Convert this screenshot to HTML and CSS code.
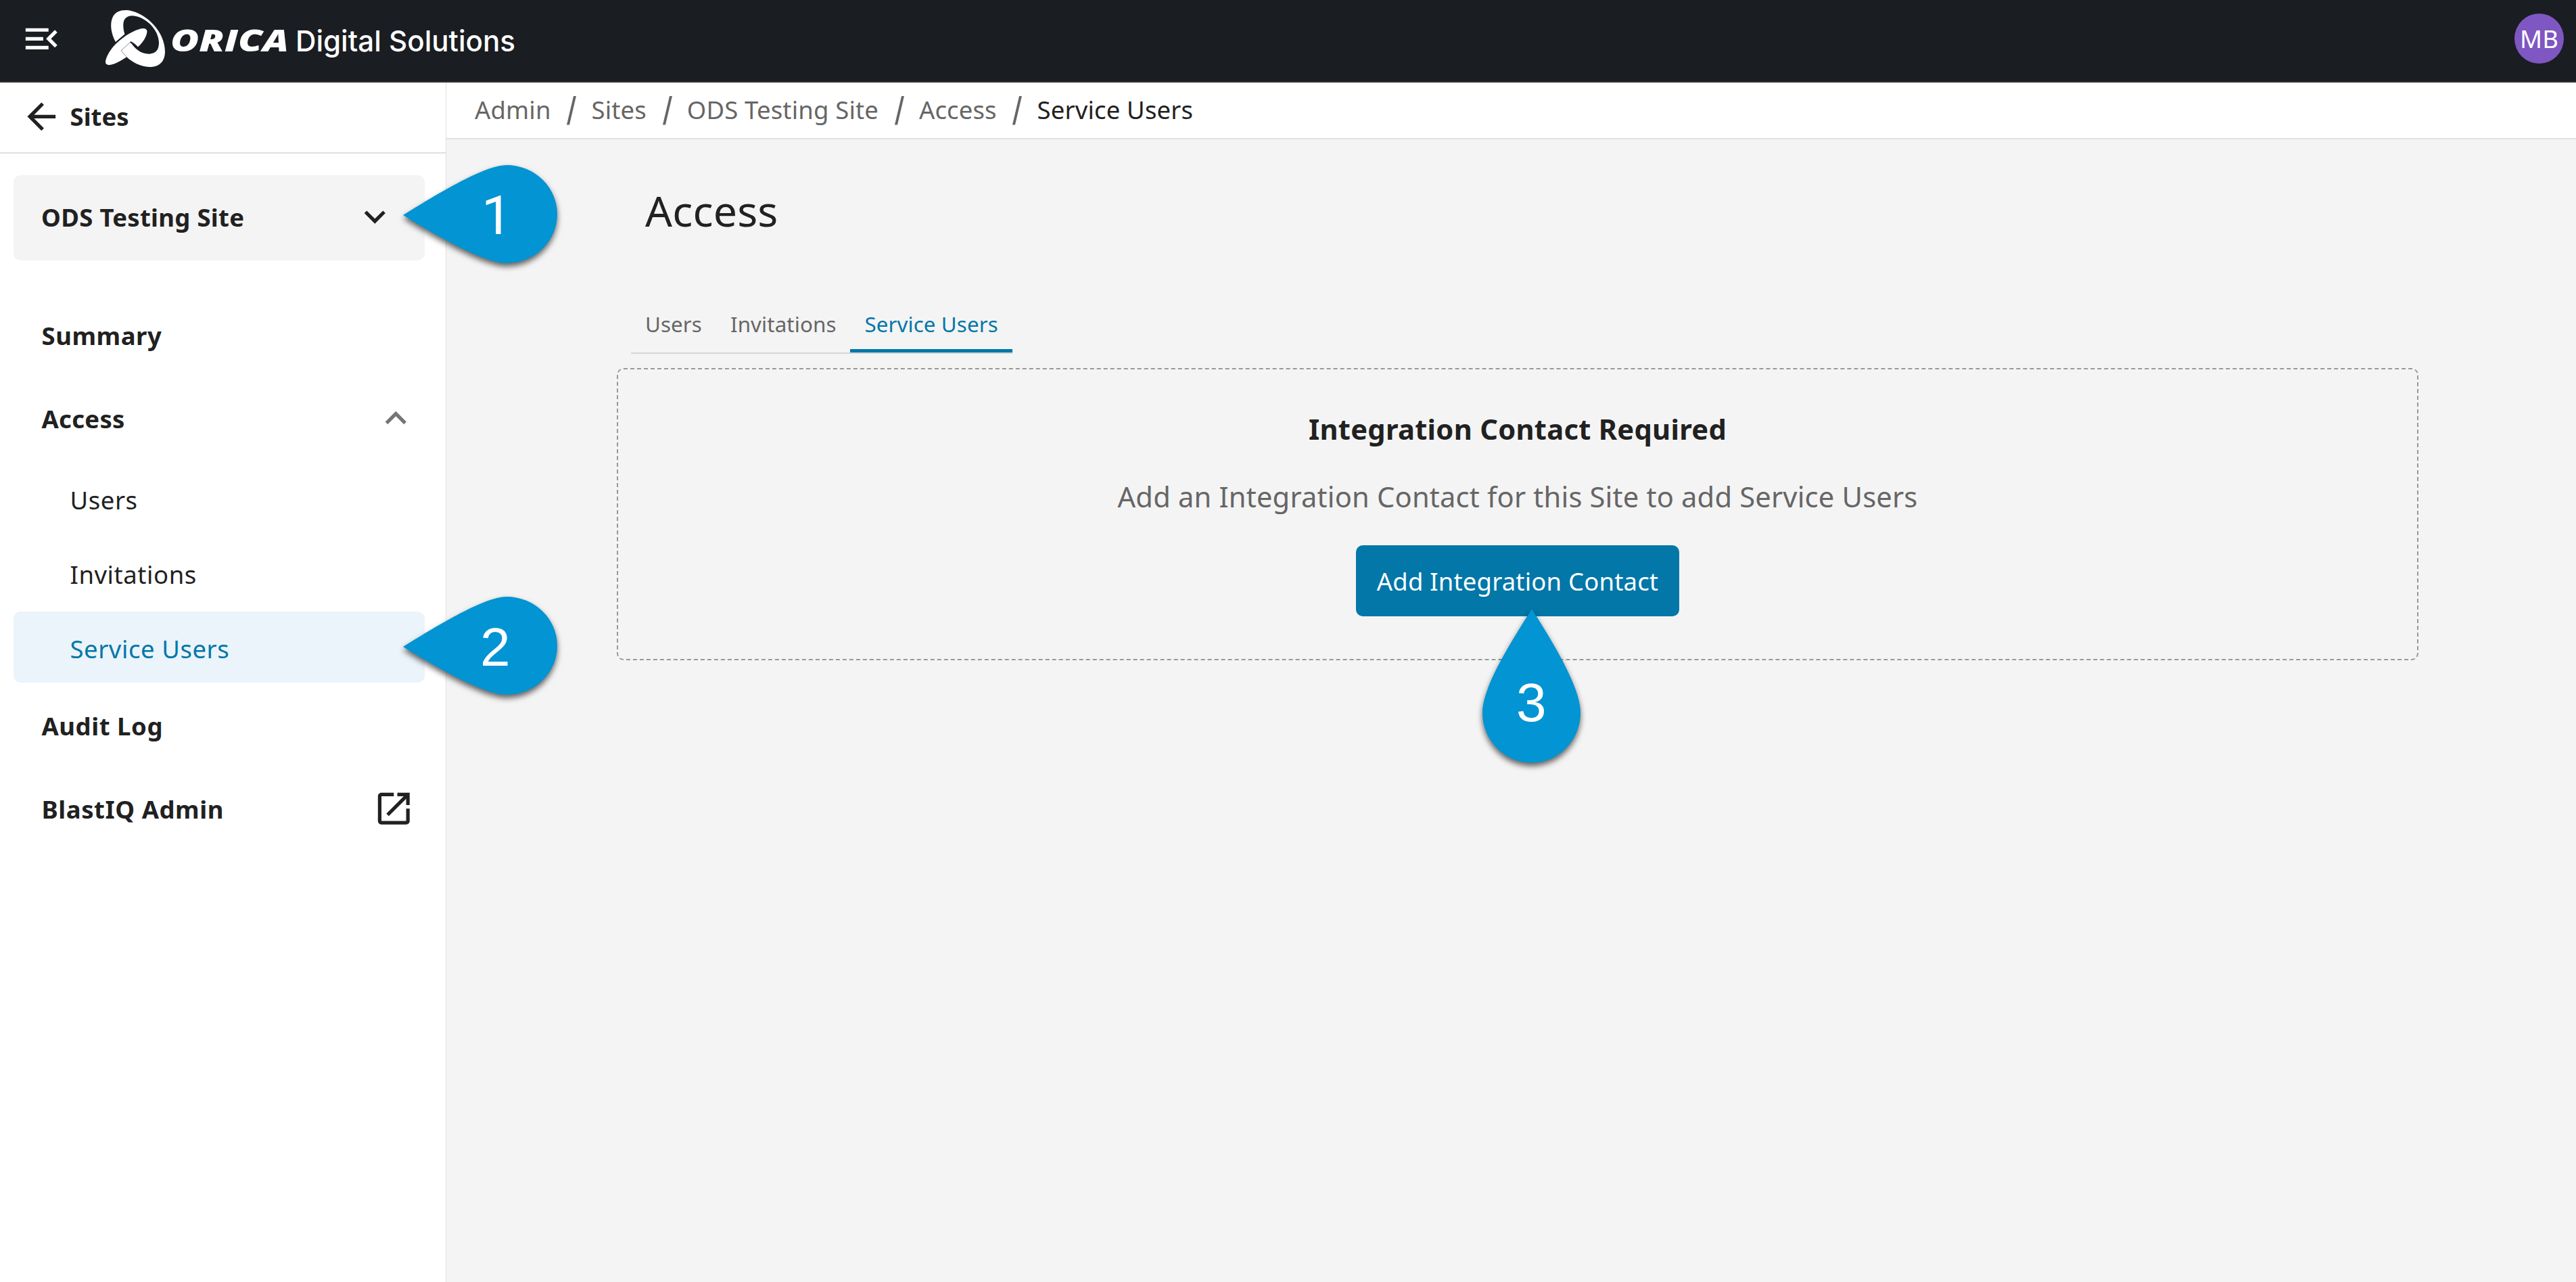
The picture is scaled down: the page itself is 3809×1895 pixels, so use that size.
FILE: index.html
```html
<!DOCTYPE html>
<html lang="en">
<head>
<meta charset="utf-8">
<title>Access - Service Users</title>
<link rel="stylesheet" href="styles.css">
</head>
<body>
<header class="topbar">
  <svg class="icon" viewBox="0 0 24 24"><path d="M3 18h13v-2H3v2zM3 6v2h13V6H3zm0 7h10v-2H3v2zm18 2.59L17.42 12 21 8.41 19.59 7l-5 5 5 5L21 15.59z"/></svg>
  <svg class="brand" viewBox="0 0 620 120">
    <g transform="scale(.33333)">
      <path d="M94 188C72 150 67 105 79 78C91 50 120 42 152 46C232 60 312 142 312 230C311 275 285 297 243 297C202 296 165 275 142 253C112 273 82 289 62 288C50 287 46 279 49 267C57 236 82 203 110 180C150 147 200 122 222 127C236 131 234 145 227 161C219 179 207 195 190 210L159 187C178 217 205 240 243 239C272 237 285 220 285 190C285 130 222 71 165 70C130 71 118 99 134 154Z"/>
      <path class="brand-gap" d="M94 188L136 153" stroke-width="5"/>
      <path class="brand-gap" d="M158 186C168 190 180 200 191 211" stroke-width="6"/>
      <path class="brand-gap" d="M159 187L117 224L142 253" stroke-width="1.5"/>
    </g>
    <text class="brand-name" x="112" y="76" textLength="175" lengthAdjust="spacingAndGlyphs">ORICA</text>
    <text class="brand-unit" x="297" y="76" textLength="325" lengthAdjust="spacingAndGlyphs">Digital Solutions</text>
  </svg>
  <div class="avatar">MB</div>
</header>
<div class="layout">
  <aside class="sidebar">
    <a class="back"><svg class="icon" viewBox="0 0 24 24"><path d="M20 11H7.83l5.59-5.59L12 4l-8 8 8 8 1.41-1.41L7.83 13H20v-2z"/></svg><span>Sites</span></a>
    <div class="site-select"><span>ODS Testing Site</span><svg class="icon" viewBox="0 0 24 24"><path d="M7.41 8.59 12 13.17l4.59-4.58L18 10l-6 6-6-6 1.41-1.41z"/></svg></div>
    <nav class="nav">
      <a class="nav-item"><span>Summary</span></a>
      <a class="nav-item nav-group"><span>Access</span><svg class="icon icon-muted" viewBox="0 0 24 24"><path d="m12 8-6 6 1.41 1.41L12 10.83l4.59 4.58L18 14z"/></svg></a>
      <div class="subnav">
        <a class="sub-item">Users</a>
        <a class="sub-item">Invitations</a>
        <a class="sub-item active">Service Users</a>
      </div>
      <a class="nav-item"><span>Audit Log</span></a>
      <a class="nav-item"><span>BlastIQ Admin</span><svg class="icon" viewBox="0 0 24 24"><path d="M19 19H5V5h7V3H5c-1.11 0-2 .9-2 2v14c0 1.1.89 2 2 2h14c1.1 0 2-.9 2-2v-7h-2v7zM14 3v2h3.59l-9.83 9.83 1.41 1.41L19 6.41V10h2V3h-7z"/></svg></a>
    </nav>
  </aside>
  <main class="main">
    <div class="breadcrumbs"><span>Admin</span><i class="slash">/</i><span>Sites</span><i class="slash">/</i><span>ODS Testing Site</span><i class="slash">/</i><span>Access</span><i class="slash">/</i><span class="current">Service Users</span></div>
    <h1 class="title">Access</h1>
    <div class="tabs"><a class="tab">Users</a><a class="tab">Invitations</a><a class="tab selected">Service Users</a></div>
    <section class="notice">
      <h2 class="notice-title">Integration Contact Required</h2>
      <p class="notice-text">Add an Integration Contact for this Site to add Service Users</p>
      <button class="button">Add Integration Contact</button>
    </section>
  </main>
</div>
<svg class="marker marker-left marker-1" viewBox="0 0 236 160"><path d="M1 75C45 48 120 1 154 1A75 72.500 0 0 1 154 146C120 146 45 102 1 75Z"/><text class="digit-one" x="117" y="103">1</text></svg>
<svg class="marker marker-left marker-2" viewBox="0 0 236 160"><path d="M1 75C45 48 120 1 154 1A75 72.500 0 0 1 154 146C120 146 45 102 1 75Z"/><text x="115" y="103">2</text></svg>
<svg class="marker marker-down" viewBox="0 0 148 236"><path d="M74 1C102 46 146 115 146 154.500A72.500 74 0 0 1 1 154.500C1 115 46 46 74 1Z"/><text x="51" y="167">3</text></svg>
</body>
</html>
```
FILE: styles.css
```css
* { box-sizing: border-box; }
body {
  margin: 0;
  height: 1895px;
  display: flex;
  flex-direction: column;
  overflow: hidden;
  background: #f4f4f4;
  color: #212121;
  font-family: "Noto Sans", sans-serif;
  font-size: 36.5px;
  line-height: 50px;
}
.icon { width: 62.6px; height: 62.6px; fill: #212121; flex: none; display: block; }
.icon-muted { fill: #757575; }

.topbar {
  display: flex;
  align-items: center;
  height: 122px;
  padding: 0 18px 6px 30px;
  background: #1a1d21;
  border-bottom: 2px solid #2f3235;
}
.topbar .icon { fill: #fff; }
.brand { width: 620px; height: 120px; margin: 6px 0 0 47px; fill: #fff; overflow: visible; }
.brand-gap { fill: none; stroke: #1a1d21; }
.brand-name { font: italic 800 45px "Open Sans", sans-serif; }
.brand-unit { font: 500 43px Inter, sans-serif; }
.avatar {
  width: 73px;
  height: 74px;
  margin-left: auto;
  border-radius: 50%;
  background: #7e57c2;
  color: #fff;
  text-align: center;
  line-height: 74px;
}

.layout { display: flex; flex: 1; }
.sidebar {
  width: 660px;
  background: #fff;
  border-right: 1px solid #e0e0e0;
  font-weight: 700;
  letter-spacing: .55px;
}
.back {
  display: flex;
  align-items: center;
  gap: 11px;
  height: 105px;
  padding: 0 0 2px 30px;
  border-bottom: 2px solid #e0e0e0;
  letter-spacing: 0;
}
.back span { margin-bottom: 2px; }
.site-select {
  display: flex;
  justify-content: space-between;
  align-items: center;
  height: 126px;
  margin: 32px 31px 50px 20px;
  padding: 0 42px 3px 41px;
  border-radius: 10px;
  background: #f4f4f4;
  letter-spacing: .3px;
}
.nav-item {
  display: flex;
  justify-content: space-between;
  align-items: center;
  height: 122.500px;
  padding: 0 45px 0 61.500px;
}
.nav-group { padding-right: 42px; letter-spacing: .3px; }
.subnav {
  display: flex;
  flex-direction: column;
  gap: 5px;
  padding: 4px 31px 3px 20px;
  font-weight: 400;
}
.sub-item { height: 105px; padding: 5px 0 0 83.500px; line-height: 100px; border-radius: 10px; }
.active { background: #eaf4fa; color: #0277a8; }

.main { flex: 1; }
.breadcrumbs {
  display: flex;
  align-items: center;
  height: 84px;
  padding: 0 0 2px 42px;
  background: #fff;
  border-bottom: 2px solid #e0e0e0;
  color: #666;
  letter-spacing: .15px;
}
.slash {
  width: 16px;
  margin: 4px 21.2px 0 22.7px;
  font: 57px "Liberation Sans", sans-serif;
  transform: scaleX(.88);
}
.current { color: #212121; }
.title {
  margin: 60px 0 0 294px;
  font-size: 62.6px;
  line-height: 90px;
  font-weight: 400;
  letter-spacing: .2px;
}
.tabs {
  display: flex;
  width: max-content;
  margin: 79px 0 21px 273px;
  border-bottom: 2px solid #d5d5d5;
  color: #666;
  font-size: 31.3px;
  letter-spacing: .1px;
}
.tab { height: 86px; padding: 0 21px; line-height: 88px; }
.selected { color: #0277a8; border-bottom: 5px solid #0277a8; }
.notice {
  display: flex;
  flex-direction: column;
  align-items: center;
  width: 2664px;
  height: 432px;
  margin-left: 252px;
  padding-top: 58px;
  border: 2px dashed #999;
  border-radius: 10px;
}
.notice-title { margin: 0; font-size: 41.7px; line-height: 60px; letter-spacing: .27px; }
.notice-text {
  margin: 40px 0 42px;
  font-size: 41.7px;
  line-height: 60px;
  letter-spacing: .17px;
  color: #666;
}
.button {
  height: 105px;
  padding: 0 31px;
  border: 0;
  border-radius: 10px;
  background: #0277a8;
  color: #fff;
  font: 36.5px "Noto Sans", sans-serif;
  letter-spacing: .17px;
}

.marker { position: absolute; fill: #0294d3; filter: drop-shadow(0 5px 4px rgba(0, 0, 0, .6)); overflow: visible; }
.marker text { fill: #fff; font: 80px "Liberation Sans", sans-serif; }
.marker .digit-one { font-family: Roboto, sans-serif; }
.marker-left { left: 595px; width: 236px; height: 160px; }
.marker-1 { top: 243px; }
.marker-2 { top: 881px; }
.marker-down { left: 2191px; top: 899px; width: 148px; height: 236px; }
```
